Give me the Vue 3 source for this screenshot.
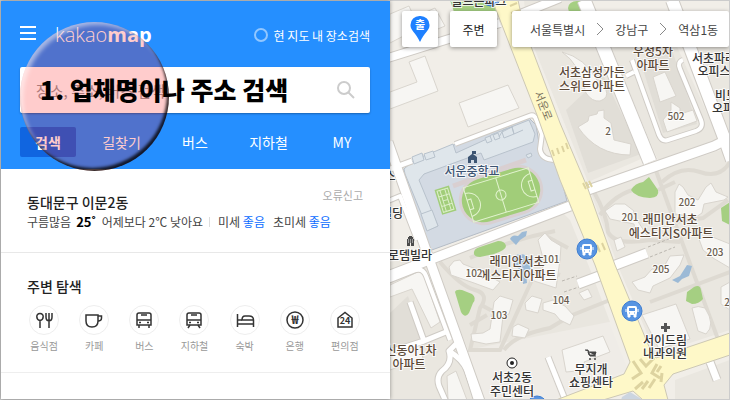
<template>
  <div class="page">
    <aside class="sidebar">
      <header class="head">
        <div class="head-top">
          <button class="menu-btn" type="button" aria-label="메뉴">
            <span></span><span></span><span></span>
          </button>
          <h1 class="logo">kakao<b>map</b></h1>
          <label class="in-map">
            <input v-model="inMap" type="checkbox" />
            현 지도 내 장소검색
          </label>
        </div>

        <form class="search" @submit.prevent>
          <input v-model="keyword" type="text" aria-label="검색어" placeholder="장소, 주소, 버스 검색" />
          <button type="submit" aria-label="검색">
            <svg viewBox="0 0 20 20" width="20" height="20">
              <circle cx="8" cy="8" r="6" />
              <path d="M12.5 12.5L18 18" />
            </svg>
          </button>
        </form>

        <nav class="tabs">
          <button
            v-for="tab in tabs"
            :key="tab"
            type="button"
            :class="{ active: tab === currentTab }"
            @click="currentTab = tab"
          >{{ tab }}</button>
        </nav>

        <div class="lens"></div>
        <p class="guide">1. 업체명이나 주소 검색</p>
      </header>

      <!-- Weather -->
      <section class="weather">
        <div class="weather-top">
          <h2>동대문구 이문2동</h2>
          <a href="#">오류신고</a>
        </div>
        <p class="weather-row">
          <span>구름많음</span>
          <strong>25˚</strong>
          <span>어제보다 2℃ 낮아요</span>
          <i></i>
          <span>미세 <em>좋음</em></span>
          <span class="fine">초미세 <em>좋음</em></span>
        </p>
      </section>

      <!-- Nearby -->
      <section class="nearby">
        <h2>주변 탐색</h2>
        <ul>
          <li v-for="c in categories" :key="c.name">
            <button type="button">
              <span class="circle">
                <svg viewBox="0 0 20 20" width="20" height="20">
                  <path v-for="d in c.paths" :key="d" :d="d" />
                  <text v-if="c.text" x="10" :y="c.textY" :font-size="c.size">{{ c.text }}</text>
                </svg>
              </span>
              {{ c.name }}
            </button>
          </li>
        </ul>
      </section>
    </aside>

    <main class="map">
      <svg class="canvas" viewBox="390 1 339 398" preserveAspectRatio="xMinYMin slice">
        <rect x="390" width="340" height="400" fill="#f1eee8" />
        <!-- Blocks -->
        <path v-for="b in blocks" :key="b" :d="b" fill="#eae7e0" />
        <path v-for="b in darkBlocks" :key="b" :d="b" fill="#e1ded7" />
        <path d="M433 262L562 212L570 220L592 274L610 322L480 380Z" fill="#e9e6df" />
        <path d="M467 350L609 322L628 370L556 398L485 400Z" fill="#efece7" />
        <!-- Park paths -->
        <g class="lanes">
          <path v-for="l in lanes" :key="l" :d="l" />
        </g>

        <!-- School -->
        <path d="M402 170L440 150L529 118L536 125L541 155L557 163L567 201L429 251Z" fill="#d3dae3" stroke="#b4bcc6" />
        <g fill="#dfe6eb" stroke="#b8c2cc">
          <path d="M404 169L414 160L453 144L456 153L489 138L491 135L529 120L535 134L533 142L484 160L481 153L424 174L419 180L438 226L428 230L405 174Z" />
          <path d="M421 214L432 210L438 226L427 231Z" />
          <path d="M412 157L422 153L424 160L414 164ZM424 154L433 151L435 157L426 160ZM485 138L490 136L492 141L487 143ZM493 135L498 133L500 138L495 140ZM502 132L512 127L514 134L504 138ZM526 155L531 153L532 156L528 158Z" />
          <path d="M499 137L503 130L512 127L514 134L523 130" fill="none" />
        </g>
        <path d="M453 186L526 160" stroke="#d9cfd1" stroke-width="5" />
        <g transform="rotate(-17 501 195)">
          <rect x="458" y="170" width="86" height="50" rx="25" fill="#d9d0d2" />
          <rect x="461" y="173" width="80" height="44" rx="22" fill="#a1cd79" />
          <g fill="none" stroke="#e2f3cf">
            <rect x="467" y="177" width="68" height="36" />
            <path d="M501 177V213M467 183C483 184 483 206 467 207M535 183C519 184 519 206 535 207M467 190H471V200H467M535 190H531V200H535" />
            <circle cx="501" cy="195" r="5" />
          </g>
        </g>
        <g transform="rotate(-17 446 200)" fill="#a1cd79" stroke="#dcefc9">
          <rect x="438" y="187" width="15" height="26" stroke="none" />
          <path d="M440 189H451V211H440ZM443 189V211M448 189V211M440 195H451M440 205H451M443 200H448" fill="none" />
        </g>

        <!-- Greens and ponds -->
        <g fill="#a5cf82">
          <path d="M450 0H498L500 13L492 15L454 12Z" />
          <ellipse cx="577" cy="8" rx="9" ry="7" />
          <path d="M631 190Q635 183 643 182L649 177L658 190Q660 197 650 198Q635 197 631 190Z" />
          <path d="M474 254Q473 249 480 247L498 241Q505 241 506 246Q506 250 494 254L480 257Q475 257 474 254Z" />
          <path d="M455 292Q456 289 462 290L472 294Q477 298 473 303L469 313Q465 319 461 312Z" />
          <path d="M687 292L694 287Q700 284 701 290L703 299Q699 304 692 304L686 301Z" />
          <path d="M721 208L730 202V225L722 221Z" />
        </g>
        <g fill="#9cbad6">
          <path d="M510 239Q512 234 518 236L522 232L527 231L526 236L520 240L516 245Z" />
          <path d="M513 257Q522 250 530 259L532 268L526 272L527 283L523 284L522 272L514 264Z" />
          <path d="M672 280L680 276L687 265L692 266L689 276L682 279L678 283Z" />
        </g>

        <!-- Buildings -->
        <g fill="#f7f6f3" stroke="#d9d5ce">
          <path v-for="b in buildings" :key="b" :d="b" />
        </g>

        <!-- Roads -->
        <g class="road casing">
          <path v-for="r in roads" :key="r.d" :d="r.d" :stroke-width="r.w + 2" />
        </g>
        <g class="road white">
          <path v-for="r in roads" :key="r.d" :d="r.d" :stroke-width="r.w" />
        </g>
        <path
          d="M492 0L518 0L524 28L560 123L588 189L615 265L650 349L656 358L730 333V355L673 374L664 385L668 400H643L633 391L603 400H556L624 374L630 362L595 265L560 180L537 115L500 20Z"
          fill="#fef8c8"
          stroke="#cdc8b4"
        />
        <g class="cross">
          <path d="M633 361L641 373L632 379M640 359L646 366L654 358M648 381L642 389M635 389L643 382M657 364L652 373L660 378M661 366L657 372M655 379L649 388M662 373L661 382" />
          <path d="M586 189L583 183M589 188L586 182M592 187L589 181M554 156L552 150M559 154L557 148M564 152L562 146M568 149L566 143M600 252L597 245M605 250L602 243M510 6L517 3M511 13L520 10M513 20L522 16" stroke-width="2" />
        </g>
        <path d="M622 397L630 392L643 400H621Z" fill="#ccd5e0" />
        <path d="M648 247L674 237M650 257L675 247M562 281L577 276M564 292L579 287" stroke="#bbb7b0" stroke-width="1" stroke-dasharray="3 2" />

        <!-- Bus stops -->
        <g v-for="s in stops" :key="s.x" :transform="`translate(${s.x} ${s.y})`">
          <circle r="10" fill="#5794e2" stroke="#3f7ed0" />
          <rect x="-5" y="-5" width="10" height="9" rx="2" fill="#fff" />
          <path d="M-4 3V6H-2V3M2 3V6H4V3M-6 -2V1M6 -2V1" fill="#fff" stroke="#fff" />
          <rect x="-3" y="-3" width="6" height="3" fill="#5794e2" />
          <path d="M-3 2H-2M2 2H3" stroke="#5794e2" />
        </g>

        <!-- Place marks -->
        <path d="M468 163V157L472 154V151H476V154H473L477 157V163H474V160H471V163Z" fill="#3c5472" />
        <path d="M407 246V239H408V237H409V236H412V237H413V239H414V246H411V243H410V246Z" fill="#4b4b4b" />
        <path d="M408 240H413M408 242H413" stroke="#eee" stroke-width="1" stroke-dasharray="1 1" />
        <path d="M664 323H667V326H670V329H667V332H664V329H661V326H664Z" fill="#555" />
        <path d="M585 350H588L590 356H596M588 352H596L595 355H589Z" fill="#444" stroke="#444" />
        <circle cx="590" cy="359" r="1" fill="#444" />
        <circle cx="595" cy="359" r="1" fill="#444" />
        <circle cx="512" cy="363" r="5" fill="#fff" stroke="#222" stroke-width="1" />
        <circle cx="512" cy="363" r="2" fill="#222" />

        <text
          v-for="t in labels"
          :key="t.text + t.x + t.y"
          class="label"
          :class="t.kind"
          :x="t.x"
          :y="t.y"
        >{{ t.text }}</text>
        <text class="label street" transform="translate(534 93) rotate(68)">서운로</text>
      </svg>

      <div class="tools">
        <button class="pin" type="button" aria-label="출발">
          <svg viewBox="0 0 20 28" width="20" height="28">
            <path d="M10 1a9 9 0 0 1 9.500 9.500c0 5-5 6.500-9.500 16.500C5.500 17 .5 15.500 .5 10.500A9 9 0 0 1 10 1z" fill="#1e80ff" />
            <text x="10" y="14" text-anchor="middle" font-size="11" font-weight="700" fill="#fff">출</text>
          </svg>
        </button>
        <button class="around" type="button">주변</button>
        <nav class="crumbs">
          <template v-for="(c, i) in crumbs" :key="c">
            <svg v-if="i" viewBox="0 0 8 14" width="8" height="14"><path d="M1 1L7 7L1 13" /></svg>
            <a href="#">{{ c }}</a>
          </template>
        </nav>
      </div>
    </main>
  </div>
</template>

<script setup>
import { ref } from "vue";

const keyword = ref("");
const inMap = ref(false);
const currentTab = ref("검색");
const tabs = ["검색", "길찾기", "버스", "지하철", "MY"];
const crumbs = ["서울특별시", "강남구", "역삼1동"];

const categories = [
  {
    name: "음식점",
    paths: [
      "M6 3.500C1.500 3.500 2 10 6 10.500C10 10 10.500 3.500 6 3.500ZM6 10.500V18",
      "M12 3V7C12 12 18 12 18 7V3M15 3V18"
    ]
  },
  { name: "카페", paths: ["M2 5H14V11Q14 17 8 17Q2 17 2 11Z", "M14 6H17.500V8Q17.500 11 14 11"] },
  {
    name: "버스",
    paths: ["M5 3H15Q17 3 17 5V15H3V5Q3 3 5 3Z", "M3 10H17M7 5H13M5 15V18M15 15V18", "M5 12.500H7M13 12.500H15"]
  },
  {
    name: "지하철",
    paths: ["M5 3H15Q17 3 17 5V15H3V5Q3 3 5 3Z", "M3 10H17M7 5H13M6 15L4 18M14 15L16 18", "M5 12.500H7M13 12.500H15"]
  },
  { name: "숙박", paths: ["M2.500 4V17M2.500 14H18.500M18.500 17V10Q18.500 6 14 6H10Q7 6 7 10H18", "M3 10H7"] },
  { name: "은행", paths: ["M10 2A8 8 0 0 1 10 18A8 8 0 0 1 10 2Z"], text: "₩", size: 12, textY: 14 },
  { name: "편의점", paths: ["M3 8L10 2.500L17 8V17H3Z"], text: "24", size: 9, textY: 14 }
];

const blocks = [
  "M390 262L425 256L475 400H390Z",
  "M591 193L724 149L730 158V330L656 354L618 266Z",
  "M524 0H583L648 156L588 182L527 30Z",
  "M610 48L674 40L720 142L658 160Z",
  "M680 30H730V134Z",
  "M675 380L730 360V400H675Z"
];

const darkBlocks = [
  "M566 110L603 75L641 154L588 173Z",
  "M640 60L672 50L697 124L663 133Z",
  "M390 313L408 296L424 342L390 352Z"
];

const lanes = [
  "M594 192Q607 215 608 232Q615 246 650 240L680 242",
  "M655 168L672 215L722 350",
  "M662 182Q680 165 700 172T730 162",
  "M600 215Q615 193 640 188M658 190L675 182",
  "M675 222L703 218L728 200",
  "M650 302L730 272",
  "M440 262Q460 286 475 290T480 308L470 350L500 350L531 282Q538 268 560 275",
  "M483 306L498 314M470 325L487 315",
  "M504 350Q515 335 550 328L570 316L615 298",
  "M470 258Q510 240 555 231M546 236L568 248"
];

const buildings = [
  "M390 14L409 6L419 28L390 43ZM419 15L435 8L445 26L426 34Z",
  "M409 62L425 56L438 91L390 109V92L417 82Z",
  "M459 103L508 85L519 108L468 127Z",
  "M562 52Q585 58 597 80Q602 87 606 90Q609 98 600 101Q592 102 586 93Q580 64 562 52Z",
  "M578 127L588 121L589 116L597 114L598 111L604 110V118L611 123L614 140L631 144L630 155Q597 155 578 127Z",
  "M653 77L665 72L676 96L660 102Z",
  "M663 120L671 110V102L680 108V114L693 110L697 121L667 132Z",
  "M605 211L615 204H625L634 211L630 220L637 220L648 237L636 235L634 224L610 219Z",
  "M675 192L679 184L683 187L688 195L698 200L706 187L711 183L716 192L728 197L724 200L704 204L702 213L696 217L675 214Z",
  "M614 240L621 237L625 247L617 251Z",
  "M390 285L422 270L440 322L431 328L412 289L390 297Z",
  "M449 267L454 261L460 260L463 264L476 269L500 282L493 290L474 283L451 275Z",
  "M494 302L500 296L513 300L509 314L503 316L500 342L486 344L472 341L471 334L483 333L490 329Z",
  "M525 303L532 296L542 299L538 313L526 310Z",
  "M543 303L553 300L565 306L574 316L570 325L560 320L555 314L543 310Z",
  "M513 327L518 324L529 329L525 338L512 336Z",
  "M579 293L588 289L592 297L584 300Z",
  "M632 282L645 277L652 269L662 270L670 256L684 255L680 265L670 278L653 286L650 293L638 290Z",
  "M703 250L699 239L710 236L730 244V268L713 258Z",
  "M692 308Q698 305 705 308Q716 325 706 334L698 331Z",
  "M721 287L730 282V310L721 304Z",
  "M642 315L676 304L690 339L659 349Z",
  "M562 350L603 336L610 352L584 362L588 370L566 372Z",
  "M538 240L545 233L551 240L561 246L560 260L556 288L531 280L545 265Z",
  "M390 353L418 342L423 358L390 370Z",
  "M447 376L456 371L467 400H448Z"
];

const roads = [
  { d: "M388 58L500 23", w: 8 },
  { d: "M388 142L427 253L481 404", w: 9 },
  { d: "M385 171L412 161", w: 5 },
  { d: "M388 201L400 196L417 240", w: 4 },
  { d: "M385 277L570 206M588 190L714 146L732 137", w: 9 },
  { d: "M584 0L650 162", w: 13 },
  { d: "M672 0L726 143L732 160", w: 12 },
  { d: "M626 76L634 72M632 60L659 135Q662 142 668 140L696 131Q704 128 701 120L680 69Q677 62 683 60", w: 4 },
  { d: "M455 144L529 116Q534 114 536 119L542 134L540 149Q541 160 556 160", w: 4 },
  { d: "M388 281L416 270Q423 268 426 276L450 340", w: 4 },
  { d: "M410 302L424 341L446 332M424 341L390 352", w: 5 },
  { d: "M457 343L449 351Q453 363 442 371Q436 377 439 386L446 402M449 351Q462 359 467 370L477 402", w: 5 },
  { d: "M548 357L566 402", w: 5 },
  { d: "M613 266L647 253M578 284L602 275", w: 9 },
  { d: "M710 362L717 380", w: 7 },
  { d: "M518 15L560 -2", w: 8 }
];

const stops = [
  { x: 587, y: 249 },
  { x: 632, y: 311 },
  { x: 491, y: -4 },
  { x: 537, y: 406 }
];

const labels = [
  { text: "골드존파크", x: 479, y: 6, kind: "poi" },
  { text: "우성5차", x: 653, y: 56, kind: "apt" },
  { text: "아파트", x: 653, y: 70, kind: "apt" },
  { text: "서초삼성가든", x: 592, y: 77, kind: "apt" },
  { text: "스위트아파트", x: 592, y: 91, kind: "apt" },
  { text: "서초파라", x: 714, y: 63, kind: "poi" },
  { text: "오피스", x: 714, y: 76, kind: "poi" },
  { text: "비트", x: 726, y: 100, kind: "poi" },
  { text: "오피", x: 723, y: 113, kind: "poi" },
  { text: "서운중학교", x: 472, y: 176, kind: "school" },
  { text: "스", x: 390, y: 181, kind: "poi" },
  { text: "빌딩", x: 392, y: 218, kind: "poi" },
  { text: "로뎀빌라", x: 410, y: 260, kind: "poi" },
  { text: "래미안서초", x: 517, y: 266, kind: "apt" },
  { text: "에스티지아파트", x: 518, y: 280, kind: "apt" },
  { text: "래미안서초", x: 670, y: 224, kind: "apt" },
  { text: "에스티지S아파트", x: 671, y: 238, kind: "apt" },
  { text: "신동아1차", x: 411, y: 355, kind: "apt" },
  { text: "아파트", x: 409, y: 369, kind: "apt" },
  { text: "서초2동", x: 512, y: 382, kind: "poi" },
  { text: "주민센터", x: 512, y: 396, kind: "poi" },
  { text: "무지개", x: 591, y: 374, kind: "poi" },
  { text: "쇼핑센타", x: 591, y: 387, kind: "poi" },
  { text: "서이드림", x: 665, y: 345, kind: "poi" },
  { text: "내과의원", x: 665, y: 358, kind: "poi" },
  { text: "502", x: 676, y: 120, kind: "num" },
  { text: "2", x: 608, y: 135, kind: "num" },
  { text: "201", x: 630, y: 221, kind: "num" },
  { text: "202", x: 687, y: 206, kind: "num" },
  { text: "203", x: 715, y: 256, kind: "num" },
  { text: "205", x: 661, y: 273, kind: "num" },
  { text: "2", x: 727, y: 306, kind: "num" },
  { text: "101", x: 551, y: 263, kind: "num" },
  { text: "102", x: 474, y: 277, kind: "num" },
  { text: "103", x: 499, y: 319, kind: "num" },
  { text: "104", x: 561, y: 304, kind: "num" }
];
</script>

<style>
body {
  margin: 0;
}
</style>

<style scoped>
.page {
  display: flex;
  box-sizing: border-box;
  min-height: 100vh;
  border: 1px solid #ccc;
  background: #fff;
  color: #222;
  font-family: "Noto Sans CJK KR", "Noto Sans", sans-serif;
  font-size: 12px;
}

button {
  padding: 0;
  border: 0;
  background: none;
  color: inherit;
  font: inherit;
  cursor: pointer;
}

h1, h2, p, ul {
  margin: 0;
  padding: 0;
}

a {
  color: inherit;
  text-decoration: none;
}

.sidebar {
  position: relative;
  z-index: 1;
  flex: 0 0 389px;
  background: #fff;
  box-shadow: 0 0 4px rgba(0, 0, 0, 0.4);
}

/* Header */
.head {
  position: relative;
  padding: 22px 20px 12px 19px;
  background: #258fff;
  color: #fff;
}

.head-top {
  display: flex;
  align-items: center;
  height: 24px;
  margin-bottom: 20px;
}

.menu-btn {
  display: grid;
  gap: 4px;
  width: 16px;
  margin: 0 19px 4px 0;
}

.menu-btn span {
  height: 2px;
  background: #fff;
}

.logo {
  flex: 1;
  font-family: "Open Sans", "Noto Sans", sans-serif;
  font-size: 20px;
  font-weight: 300;
  line-height: 24px;
}

.logo b {
  font-weight: 700;
}

.in-map {
  display: flex;
  align-items: center;
  gap: 6px;
}

.in-map input {
  appearance: none;
  width: 14px;
  height: 14px;
  margin: 0;
  border: 2px solid #92c7ff;
  border-radius: 50%;
}

.search {
  display: flex;
  align-items: center;
  height: 46px;
  margin-bottom: 14px;
  border-radius: 2px;
  background: #fff;
  box-shadow: 0 1px 2px rgba(0, 0, 0, 0.3);
}

.search input {
  flex: 1;
  min-width: 0;
  padding: 0 16px;
  border: 0;
  outline: 0;
  background: none;
  font: inherit;
  font-size: 15px;
}

.search input::placeholder {
  color: #999;
}

.search button {
  display: flex;
  margin-right: 14px;
}

.search svg {
  fill: none;
  stroke: #ccc;
  stroke-width: 2;
}

.tabs {
  display: flex;
  justify-content: space-between;
}

.tabs button {
  width: 56px;
  height: 30px;
  border-radius: 2px;
  font-size: 14px;
}

.tabs .active {
  background: #1065e0;
  font-weight: 700;
}

/* Magnifier over the search box */
.lens {
  position: absolute;
  top: 21px;
  left: 19px;
  width: 149px;
  height: 149px;
  border-radius: 50%;
  background: rgba(255, 0, 0, 0.2);
  box-shadow:
    inset -2px -3px 3px rgba(0, 0, 0, 0.8),
    inset 3px 3px 4px rgba(255, 255, 255, 0.5);
  pointer-events: none;
}

.guide {
  position: absolute;
  top: 70px;
  left: 39px;
  color: #000;
  font-size: 25px;
  font-weight: 900;
  line-height: 36px;
  white-space: nowrap;
  pointer-events: none;
}

/* Weather */
.weather {
  padding: 19px 27px 20px 26px;
  border-bottom: 1px solid #e8e8e8;
}

.weather-top {
  display: flex;
  justify-content: space-between;
  height: 24px;
}

.weather h2,
.nearby h2 {
  font-size: 14px;
  font-weight: 500;
  line-height: 20px;
}

.weather h2 {
  align-self: flex-end;
}

.weather-top a {
  color: #aaa;
  font-size: 11px;
  line-height: 14px;
}

.weather-row {
  display: flex;
  align-items: center;
  line-height: 20px;
  color: #444;
  white-space: nowrap;
}

.weather-row strong {
  margin: 0 6px 0 5px;
  color: #000;
  font-size: 13px;
}

.weather-row i {
  width: 1px;
  height: 10px;
  margin: 0 8px 0 6px;
  background: #ddd;
}

.weather-row em {
  color: #0b6cff;
  font-style: normal;
}

.weather-row .fine {
  margin-left: 8px;
}

/* Nearby */
.nearby {
  padding: 23px 20px 19px 18px;
  border-bottom: 1px solid #eee;
}

.nearby h2 {
  margin: 0 0 9px 8px;
}

.nearby ul {
  display: grid;
  grid-template-columns: repeat(7, 1fr);
  list-style: none;
}

.nearby button {
  display: grid;
  justify-items: center;
  gap: 4px;
  width: 100%;
  color: #999;
  font-size: 10px;
  line-height: 14px;
}

.circle {
  display: grid;
  place-items: center;
  box-sizing: border-box;
  width: 30px;
  height: 30px;
  border: 1px solid #eee;
  border-radius: 50%;
}

.circle path {
  fill: none;
  stroke: #333;
  stroke-width: 1.5;
}

.circle text {
  fill: #333;
  font-weight: 700;
  text-anchor: middle;
}

/* Map */
.map {
  position: relative;
  flex: 1;
  min-width: 0;
  overflow: hidden;
}

.canvas {
  position: absolute;
  inset: 0;
  width: 100%;
  height: 100%;
}

.lanes path {
  fill: none;
  stroke: #dedad2;
  stroke-width: 4;
}

.road path {
  fill: none;
  stroke-linejoin: round;
}

.casing {
  stroke: #cfcbc5;
}

.white {
  stroke: #fff;
}

.cross {
  fill: none;
  stroke: #ddd3a0;
  stroke-width: 3;
}

.label {
  fill: #333;
  stroke: rgba(255, 255, 255, 0.8);
  stroke-width: 2px;
  paint-order: stroke;
  font-size: 12px;
  font-weight: 500;
  text-anchor: middle;
}

.label.apt {
  fill: #5b4938;
}

.label.school {
  fill: #3c5472;
}

.label.num {
  fill: #6b5d50;
  font-size: 10px;
}

.label.street {
  fill: #7b735d;
  stroke: none;
  font-size: 11px;
  font-weight: 400;
  text-anchor: start;
}

.tools {
  position: relative;
  display: flex;
  height: 36px;
  padding-top: 10px;
  padding-left: 12px;
}

.tools > * {
  background: #fff;
  border-radius: 2px;
  box-shadow: 0 1px 4px rgba(0, 0, 0, 0.4);
}

.pin {
  display: grid;
  place-items: center;
  width: 36px;
  margin-right: 12px;
}

.around {
  width: 47px;
  margin-right: 15px;
}

.crumbs {
  display: flex;
  flex: 1;
  align-items: center;
  gap: 11px;
  padding-left: 18px;
  color: #444;
  white-space: nowrap;
}

.crumbs svg {
  fill: none;
  stroke: #888;
}
</style>
